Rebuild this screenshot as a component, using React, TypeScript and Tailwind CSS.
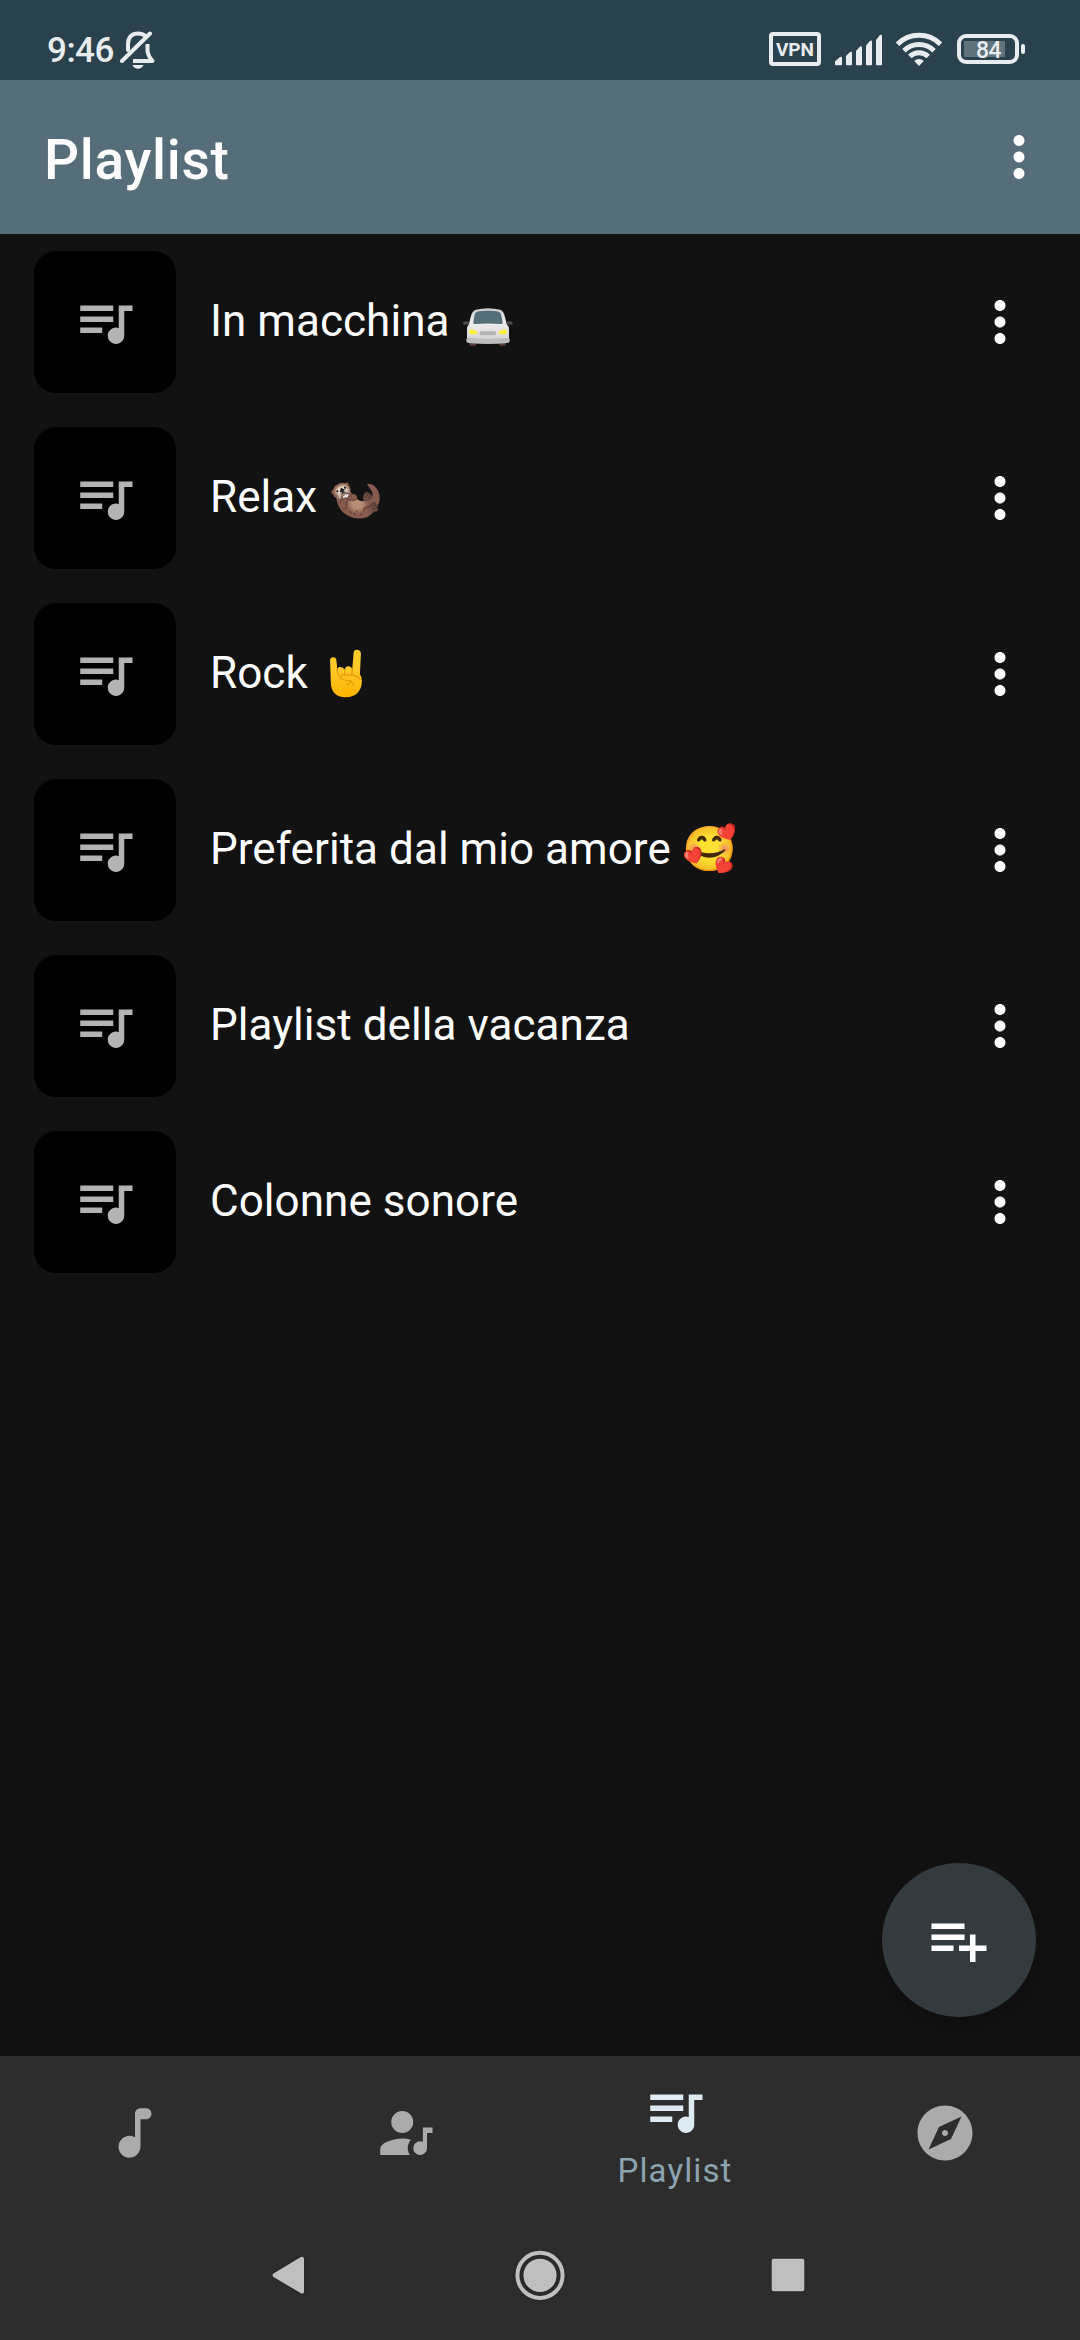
import React from "react";

const QUEUE = "M15 6H3v2h12V6zm0 4H3v2h12v-2zM3 16h8v-2H3v2zM17 6v8.180c-.31-.11-.65-.18-1-.18-1.66 0-3 1.340-3 3s1.340 3 3 3 3-1.340 3-3V8h3V6h-5z";
const MORE = "M12 8c1.1 0 2-.9 2-2s-.9-2-2-2-2 .9-2 2 .9 2 2 2zm0 2c-1.1 0-2 .9-2 2s.9 2 2 2 2-.9 2-2-.9-2-2-2zm0 6c-1.1 0-2 .9-2 2s.9 2 2 2 2-.9 2-2-.9-2-2-2z";
const ADD = "M14 10H2v2h12v-2zm0-4H2v2h12V6zm4 8v-4h-2v4h-4v2h4v4h2v-4h4v-2h-4zM2 16h8v-2H2v2z";
const NOTE = "M12 5v8.55c-.94-.54-2.1-.75-3.33-.32-1.34.48-2.37 1.67-2.61 3.07-.46 2.74 1.86 5.08 4.59 4.65 1.96-.31 3.35-2.11 3.35-4.1V7h2c1.1 0 2-.9 2-2s-.9-2-2-2h-2c-1.1 0-2 .9-2 2z";
const ARTIST = "M11,14C12,14 13.05,14.16 14.2,14.44C13.39,15.31 13,16.33 13,17.5C13,18.39 13.25,19.23 13.78,20H3V18C3,16.81 3.91,15.85 5.74,15.12C7.57,14.38 9.33,14 11,14M11,12C9.92,12 9,11.61 8.18,10.83C7.38,10.05 7,9.11 7,8C7,6.92 7.38,6 8.18,5.18C9,4.38 9.92,4 11,4C12.11,4 13.05,4.38 13.83,5.18C14.61,6 15,6.92 15,8C15,9.11 14.61,10.05 13.83,10.83C13.05,11.61 12.11,12 11,12M18.5,10H22V12H20V17.5A2.5,2.5 0 0,1 17.5,20A2.5,2.5 0 0,1 15,17.5A2.5,2.5 0 0,1 17.5,15C17.86,15 18.19,15.07 18.5,15.21V10Z";
const EXPLORE = "M12 10.9c-.61 0-1.1.49-1.1 1.1s.49 1.1 1.1 1.1c.61 0 1.1-.49 1.1-1.1s-.49-1.1-1.1-1.1zM12 2C6.48 2 2 6.48 2 12s4.48 10 10 10 10-4.48 10-10S17.52 2 12 2zm2.19 12.19L6 18l3.81-8.19L18 6l-3.81 8.19z";

function Icon({ d, className = "" }: { d: string; className?: string }) {
  return (
    <svg viewBox="0 0 24 24" className={`size-[66px] shrink-0 fill-current ${className}`}>
      <path d={d} />
    </svg>
  );
}

function Car() {
  return (
    <svg viewBox="68 50 150 120" role="img" aria-label="🚘" className="ml-[3px] mt-[9px] h-[40px] w-[50px]">
      <defs>
        <linearGradient id="carBody" x1="0" y1="0" x2="0" y2="1">
          <stop offset="0" stopColor="#c9c9c9" />
          <stop offset="0.45" stopColor="#efefef" />
          <stop offset="1" stopColor="#d4d4d4" />
        </linearGradient>
      </defs>
      <path d="M68 100q0-7 8-7h10v10H74q-6 0-6-3zM217 100q0-7-8-7h-10v10h12q6 0 6-3z" fill="#48494a" />
      <rect x="87" y="148" width="21" height="18" rx="6" fill="#5d4037" />
      <rect x="176" y="148" width="21" height="18" rx="6" fill="#5d4037" />
      <path d="M80 148v-30q0-10 6-16l5-22q4-18 15-22 37-9 74 0 10 4 14 22l5 22q7 6 7 16v30z" fill="url(#carBody)" />
      <path d="M104 69q3-5 12-6 27-3 53 0 9 1 12 6 5 16 6 29-1 4-6 3-39-3-77 0-5 1-5-3 1-14 5-29z" fill="#546e7a" />
      <path d="M78 147q0-5 6-5 60 6 118 0 6 0 6 5v5q0 6-8 6-57 6-114 0-8 0-8-6z" fill="#bdbdbd" />
      <rect x="118" y="123" width="49" height="12" rx="4" fill="#b4b4b4" />
      <path d="M88 118q12-2 24 7 0 7-9 7-13 1-17-5-1-8 2-9zM198 118q-12-2-24 7 0 7 9 7 13 1 17-5 1-8-2-9z" fill="#fdee35" />
    </svg>
  );
}

function Horns() {
  return (
    <svg viewBox="56 56 102 148" role="img" aria-label="🤘" className="ml-[10px] mt-[-1px] h-[49px] w-[34px]">
      <defs>
        <linearGradient id="hand" x1="0" y1="0" x2="0" y2="1">
          <stop offset="0.4" stopColor="#ffca28" />
          <stop offset="1" stopColor="#ffb300" />
        </linearGradient>
      </defs>
      <path
        d="M59 91q0-10 9-10t10 10l3 28q0-8 8-9 10 0 14 9 2-11 11-11t12 9l4-49q1-10 10-10 12 1 12 12l-3 62q6 7 6 20c0 30-17 50-49 50-30 0-45-18-45-48z"
        fill="url(#hand)"
      />
      <path
        d="M81 117q-2 12 6 21M103 118v14M126 116l-1 17M91 137q2-4 10-3l26 1q12 1 24 13M91 137q-2 8 8 12 8 3 18 2 9 2 13 14M112 167q0-9 12-13"
        fill="none"
        stroke="#e8960c"
        strokeWidth="3.500"
        strokeLinecap="round"
      />
    </svg>
  );
}

const playlists: { name: string; emoji?: React.ReactNode }[] = [
  { name: "In macchina", emoji: <Car /> },
  { name: "Relax", emoji: "🦦" },
  { name: "Rock", emoji: <Horns /> },
  { name: "Preferita dal mio amore", emoji: "🥰" },
  { name: "Playlist della vacanza" },
  { name: "Colonne sonore" },
];

function StatusBar() {
  return (
    <div className="flex h-[80px] shrink-0 items-start bg-[#2a424d] pl-[47px] pr-[55px] text-[#e8ecee]">
      <span className="mt-[30px] text-[35px] font-medium leading-[41px] tracking-[-0.5px]">9:46</span>
      <svg viewBox="0 0 36 40" className="ml-[6px] mt-[30px] h-[40px] w-[36px]" fill="none" stroke="currentColor" strokeWidth="4" strokeLinecap="round">
        <path d="M8 20v-6C8 7 12 3.500 18 3.500c3 0 5.500.8 7.300 2.500" />
        <path d="M2 31 L30 3.500" />
        <path d="M27.500 14v6c0 4 1.500 7 5 11H13" strokeLinejoin="round" strokeLinecap="butt" />
        <path d="M12.500 35h11c-1 2.500-3 3.800-5.500 3.800s-4.500-1.300-5.500-3.800z" fill="currentColor" stroke="none" />
      </svg>
      <div className="ml-auto mt-[32px] flex h-[34px] w-[52px] items-center justify-center rounded-[4px] border-4 border-[#e8ecee] text-[19px] font-bold leading-none">
        VPN
      </div>
      <svg viewBox="0 0 48 32" className="ml-[14px] mt-[34px] h-[32px] w-[48px] fill-current">
        <path d="M0 27.500 5 23q2-1 2 1v6.200q0 1-1 1H1q-1 0-1-1z" />
        <path d="M11 22 15 18q2-1 2 1v11.200q0 1-1 1h-4q-1 0-1-1z" />
        <path d="M21 17 25 12.500q2-1 2 1v16.700q0 1-1 1h-4q-1 0-1-1z" />
        <path d="M31 11.500 35 6.800q2-1 2 1v22.400q0 1-1 1h-4q-1 0-1-1z" />
        <path d="M41 6 45 1q2-1 2 1v28.200q0 1-1 1h-4q-1 0-1-1z" />
      </svg>
      <svg viewBox="0 0 46 34" className="ml-[13px] mt-[32px] h-[34px] w-[46px]" fill="none" stroke="currentColor" strokeWidth="5">
        <path d="M1.500 12.200a30.500 30.500 0 0 1 43 0" />
        <path d="M8 18.700a21.300 21.300 0 0 1 30 0" />
        <path d="M13.800 24.500a13 13 0 0 1 18.400 0" />
        <path d="M18.200 29a6.800 6.800 0 0 1 9.600 0L23 34z" fill="currentColor" stroke="none" />
      </svg>
      <div className="ml-[15px] mt-[34px] flex h-[30px] w-[62px] items-center rounded-[9px] border-4 border-[#e8ecee] pl-[3px]">
        <div className="flex h-[16px] w-[41px] items-center justify-center bg-[#5e737b] pl-[8px] pt-[2px] text-[23px] font-medium leading-none tracking-[-0.5px]">
          84
        </div>
      </div>
      <div className="ml-[2px] mt-[44px] h-[10px] w-[4px] rounded-[2px] bg-[#e8ecee]" />
    </div>
  );
}

export default function App() {
  return (
    <div className="flex h-[2340px] w-[1080px] flex-col overflow-hidden bg-[#121212] text-white [font-family:Roboto,sans-serif]">
      <StatusBar />
      <header className="flex h-[154px] shrink-0 items-center justify-between bg-[#566e79] pl-[44px] pr-[28px]">
        <h1 className="pt-[5px] text-[55px] font-medium leading-[64px] tracking-[0.7px]">Playlist</h1>
        <Icon d={MORE} />
      </header>

      <main className="relative flex-1">
        <ul>
          {playlists.map((p) => (
            <li key={p.name} className="flex h-[176px] items-center pl-[34px] pr-[47px]">
              <div className="flex size-[142px] items-center justify-center rounded-[22px] bg-black text-[#b3b3b3]">
                <Icon d={QUEUE} />
              </div>
              <div className="ml-[34px] flex flex-1 items-center whitespace-pre text-[44px] leading-[52px] tracking-[0.05px]">
                <span className="-mt-[2px]">
                  {p.name}{" "}
                  {typeof p.emoji === "string" && p.emoji}
                </span>
                {typeof p.emoji !== "string" && p.emoji}
              </div>
              <Icon d={MORE} />
            </li>
          ))}
        </ul>
        <button className="absolute bottom-[39px] right-[44px] flex size-[154px] items-center justify-center rounded-full bg-[#343b3f] shadow-[0_8px_24px_rgba(0,0,0,0.25)]">
          <Icon d={ADD} />
        </button>
      </main>

      <nav className="grid h-[154px] shrink-0 grid-cols-4 bg-[#2d2d2d] text-[#ababab]">
        <div className="flex items-center justify-center"><Icon d={NOTE} /></div>
        <div className="flex items-center justify-center"><Icon d={ARTIST} /></div>
        <div className="flex flex-col items-center pt-[22px]">
          <Icon d={QUEUE} className="text-[#dfebf2]" />
          <span className="mt-[8px] text-[33px] leading-[38px] tracking-[1.1px] text-[#8ba4b0]">Playlist</span>
        </div>
        <div className="flex items-center justify-center"><Icon d={EXPLORE} /></div>
      </nav>

      <div className="flex h-[130px] shrink-0 justify-center bg-[#2d2d2d] pt-[35px] text-[#bfbfbf]">
        <div className="flex w-[248px] justify-center">
          <svg viewBox="0 0 60 60" className="size-[60px] fill-current drop-shadow-sm">
            <path d="M11.500 28.500 38.500 12.300Q42 10.800 42 14V46.500Q42 49.800 38.500 48L11.500 32Q9.500 30.300 11.500 28.500Z" />
          </svg>
        </div>
        <div className="flex w-[248px] justify-center">
          <svg viewBox="0 0 60 60" className="size-[60px] fill-current drop-shadow-sm">
            <circle cx="30" cy="30.300" r="22.600" fill="none" stroke="currentColor" strokeWidth="4" />
            <circle cx="30" cy="30.300" r="16.600" />
          </svg>
        </div>
        <div className="flex w-[248px] justify-center">
          <svg viewBox="0 0 60 60" className="size-[60px] fill-current drop-shadow-sm">
            <rect x="13.700" y="13.700" width="32.600" height="32.600" rx="2" />
          </svg>
        </div>
      </div>
    </div>
  );
}
